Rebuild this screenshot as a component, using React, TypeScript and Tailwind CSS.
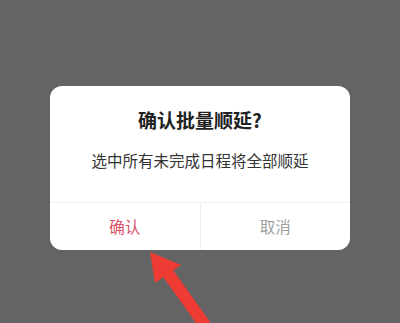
import React from "react";

export default function App() {
  const font = { fontFamily: '"Noto Sans CJK SC", "Noto Sans", sans-serif' };
  return (
    <div className="relative w-[400px] h-[323px] bg-[#646464] overflow-hidden flex justify-center pt-[86px]" style={font}>
      <div className="w-[300px] h-[164px] bg-white rounded-[12px] flex flex-col">
        <div className="pt-[24px] flex flex-col items-center">
          <div className="h-[20px] leading-[20px] text-[19px] font-bold text-[#222]">确认批量顺延?</div>
          <div className="mt-[20px] h-[20px] leading-[20px] text-[15.5px] text-[#333]">选中所有未完成日程将全部顺延</div>
        </div>
        <div className="mt-[32px] border-t border-[#f0f0f0] flex flex-1">
          <div className="flex-1 flex items-center justify-center text-[15.5px] text-[#d9506a] border-r border-[#f0f0f0]">确认</div>
          <div className="flex-1 flex items-center justify-center text-[15.5px] text-[#a0a0a0]">取消</div>
        </div>
      </div>
      <svg className="absolute left-0 top-0" width="400" height="323" viewBox="0 0 400 323">
        <line x1="167" y1="272" x2="212" y2="335" stroke="#ee3b33" strokeWidth="12" />
        <polygon points="150,252 155,283 181,265" fill="#ee3b33" />
      </svg>
    </div>
  );
}
